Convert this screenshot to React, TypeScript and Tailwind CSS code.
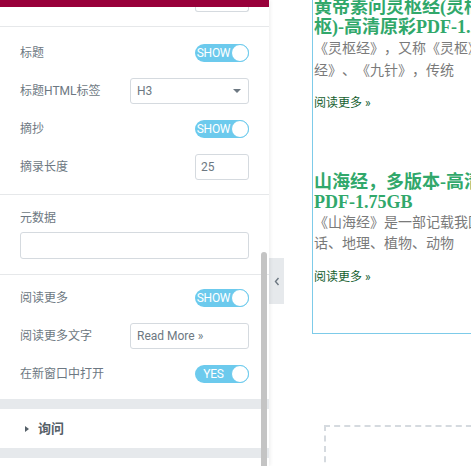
import React from "react";

const label = "text-[12px] text-[#6d7882]";

function Toggle({ text }: { text: string }) {
  return (
    <div className="relative w-[54px] h-[18px] rounded-full bg-[#6ccaed] flex items-center">
      <div className="w-[37px] flex justify-center">
        <span className="text-[12px] leading-none text-white tracking-[-0.3px]">{text}</span>
      </div>
      <div className="absolute right-0 top-0 w-[18px] h-[18px] rounded-full bg-white border border-[#6ccaed]" />
    </div>
  );
}

function Row({ children }: { children: React.ReactNode }) {
  return <div className="h-[38px] flex items-center justify-between">{children}</div>;
}

export default function App() {
  return (
    <div
      className="w-[471px] h-[466px] overflow-hidden flex bg-white [text-spacing-trim:space-all]"
      style={{ fontFamily: "Roboto, 'Noto Sans CJK SC', sans-serif" }}
    >
      {/* Sidebar */}
      <div className="relative w-[269px] shrink-0 flex flex-col bg-white shadow-[1px_0_4px_rgba(0,0,0,0.08)] z-10">
        <div className="h-[7px] bg-[#98003a]" />
        <div className="h-[20px] flex justify-end pr-[20px] border-b border-[#e6e8ea]">
          <div className="w-[54px] h-[5px] border-x border-b border-[#d5dadf] rounded-b-[3px]" />
        </div>

        <div className="pt-[7px] pb-[8px] px-[20px] border-b border-[#e6e8ea]">
          <Row>
            <span className={label}>标题</span>
            <Toggle text="SHOW" />
          </Row>
          <Row>
            <span className={label}>标题HTML标签</span>
            <div className="w-[119px] h-[26px] border border-[#d5dadf] rounded-[3px] flex items-center justify-between pl-[6px] pr-[7px]">
              <span className="text-[12px] text-[#6d7882]">H3</span>
              <div className="w-0 h-0 border-l-[4px] border-r-[4px] border-t-[4px] border-l-transparent border-r-transparent border-t-[#6d7882]" />
            </div>
          </Row>
          <Row>
            <span className={label}>摘抄</span>
            <Toggle text="SHOW" />
          </Row>
          <Row>
            <span className={label}>摘录长度</span>
            <div className="w-[54px] h-[26px] border border-[#d5dadf] rounded-[3px] flex items-center pl-[5px]">
              <span className="text-[12px] text-[#6d7882]">25</span>
            </div>
          </Row>
        </div>

        <div className="pt-[15px] pb-[15px] px-[20px] border-b border-[#e6e8ea]">
          <div className={`${label} h-[16px] leading-[16px]`}>元数据</div>
          <div className="mt-[6px] h-[27px] border border-[#d5dadf] rounded-[3px]" />
        </div>

        <div className="pt-[4px] pb-[6px] px-[20px]">
          <Row>
            <span className={label}>阅读更多</span>
            <Toggle text="SHOW" />
          </Row>
          <Row>
            <span className={label}>阅读更多文字</span>
            <div className="w-[119px] h-[26px] border border-[#d5dadf] rounded-[3px] flex items-center pl-[6px]">
              <span className="text-[12px] text-[#6d7882]">Read More »</span>
            </div>
          </Row>
          <Row>
            <span className={label}>在新窗口中打开</span>
            <Toggle text="YES" />
          </Row>
        </div>

        <div className="h-[10px] bg-[#e6e9ec]" />
        <div className="h-[39px] flex items-center pl-[25px] gap-[9px]">
          <div className="w-0 h-0 border-t-[3.5px] border-b-[3.5px] border-l-[4px] border-t-transparent border-b-transparent border-l-[#556068]" />
          <span className="text-[13px] font-bold text-[#556068]">询问</span>
        </div>
        <div className="h-[10px] bg-[#e6e9ec]" />
        <div className="flex-1" />

        {/* scrollbar */}
        <div className="absolute left-[261px] top-[252px] bottom-0 w-[6px] rounded-t-[3px] bg-[#c4c4c4]" />
      </div>

      {/* Preview */}
      <div className="relative flex-1 bg-white">
        <div className="absolute left-0 top-[258px] w-[15px] h-[46px] bg-[#e6e9ec] flex items-center justify-center">
          <svg width="6" height="9" viewBox="0 0 6 9">
            <path d="M4.5 1 L1.5 4.5 L4.5 8" fill="none" stroke="#6d7882" strokeWidth="1.4" />
          </svg>
        </div>

        <div className="ml-[43px] mt-[-3px] w-[400px] border-l border-b border-[#7dcbe9] pl-[1px] pb-[48px]">
          <div
            className="text-[18px] leading-[20px] font-bold text-[#31a86b] whitespace-nowrap"
            style={{ fontFamily: "'Liberation Serif', 'Noto Sans CJK SC', serif" }}
          >
            <div>黄帝素问灵枢经(灵枢经</div>
            <div>枢)-高清原彩PDF-1.2GB</div>
          </div>
          <div className="text-[14px] leading-[22px] text-[#7a7a7a] whitespace-nowrap">
            <div>《灵枢经》，又称《灵枢》、《针经》</div>
            <div>经》、《九针》，传统</div>
          </div>
          <div className="mt-[14px] text-[12px] leading-[16px] text-[#15602f]">阅读更多 »</div>

          <div
            className="mt-[61px] text-[18px] leading-[20px] font-bold text-[#31a86b] whitespace-nowrap"
            style={{ fontFamily: "'Liberation Serif', 'Noto Sans CJK SC', serif" }}
          >
            <div>山海经，多版本-高清原彩</div>
            <div>PDF-1.75GB</div>
          </div>
          <div className="text-[14px] leading-[21px] text-[#7a7a7a] whitespace-nowrap">
            <div>《山海经》是一部记载我国古代神</div>
            <div>话、地理、植物、动物</div>
          </div>
          <div className="mt-[15px] text-[12px] leading-[16px] text-[#15602f]">阅读更多 »</div>
        </div>

        <div className="ml-[55px] mt-[91px] w-[300px] h-[100px] border-2 border-dashed border-[#d5dadf]" />
      </div>
    </div>
  );
}
